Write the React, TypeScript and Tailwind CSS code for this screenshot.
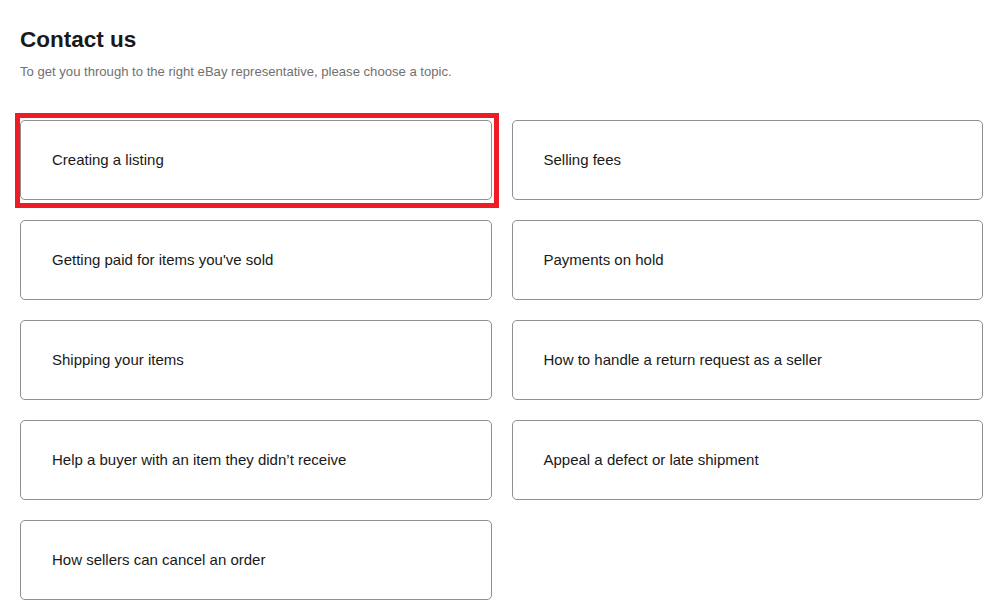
const topics = [
  "Creating a listing",
  "Selling fees",
  "Getting paid for items you've sold",
  "Payments on hold",
  "Shipping your items",
  "How to handle a return request as a seller",
  "Help a buyer with an item they didn\u2019t receive",
  "Appeal a defect or late shipment",
  "How sellers can cancel an order",
];

const App = () => {
  return (
    <div
      className="relative min-h-[603px] bg-white pl-5 pt-[26px] text-[#191919]"
      style={{ fontFamily: '"Liberation Sans", Arial, sans-serif' }}
    >
      <h1 className="text-[22.5px] font-bold leading-[28px]">Contact us</h1>
      <p className="mt-[10px] text-[13.1px] leading-4 text-[#707070]">
        To get you through to the right eBay representative, please choose a
        topic.
      </p>

      <div className="mt-10 grid w-[963px] grid-cols-2 gap-5">
        {topics.map((topic, index) => (
          <button
            key={index}
            className="relative flex h-20 items-center rounded-[5px] border border-[#8f8f8f] bg-white pl-[31px] text-left text-[15px] text-[#191919]"
          >
            {topic}
            {index === 0 && (
              <span className="pointer-events-none absolute -left-[6px] -top-[8px] h-[95px] w-[484px] border-[5px] border-[#ee1c25]" />
            )}
          </button>
        ))}
      </div>
    </div>
  );
};

export default App;
